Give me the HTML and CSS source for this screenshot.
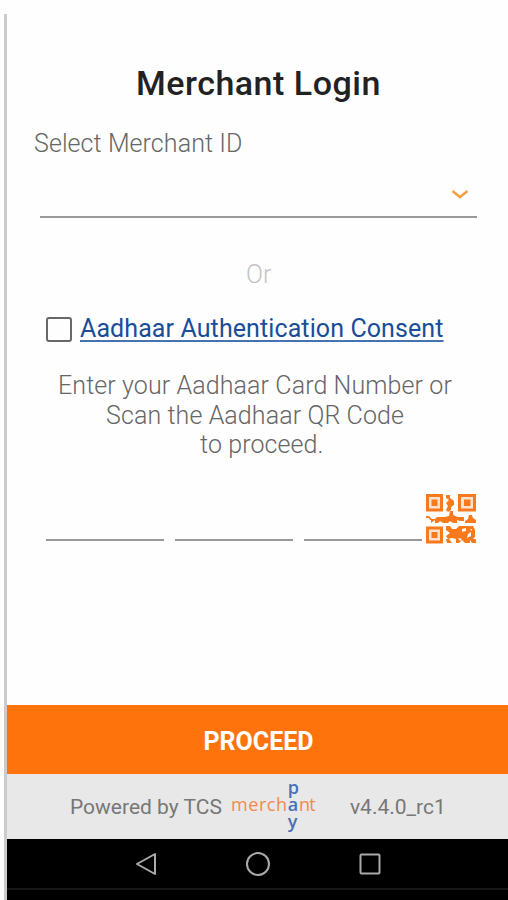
FILE: index.html
```html
<!DOCTYPE html>
<html lang="en">
<head>
  <meta charset="UTF-8" />
  <meta name="viewport" content="width=device-width, initial-scale=1.0" />
  <title>Merchant Login</title>
  <link rel="stylesheet" href="styles.css">
</head>
<body>
  <div class="edge"></div>
  <div class="screen">
    <main class="login">
      <h1>Merchant Login</h1>
      <div class="merchant-label">Select Merchant ID</div>
      <div class="merchant-select">
        <svg width="18" height="11" viewBox="0 0 18 11"><path d="M1.5 2 L9 8 L16.5 2" fill="none" stroke="#f5a044" stroke-width="2.6"/></svg>
      </div>
      <div class="or">Or</div>
      <div class="consent">
        <span class="checkbox"></span>
        <a class="consent-link">Aadhaar Authentication Consent</a>
      </div>
      <p class="hint">
        <span class="hint-first">Enter your Aadhaar Card Number or</span>
        <span class="hint-second">Scan the Aadhaar QR Code</span>
        <span class="hint-third">to proceed.</span>
      </p>
      <div class="aadhaar">
        <span class="digits"></span>
        <span class="digits"></span>
        <span class="digits"></span>
        <svg class="qr" width="50" height="50" viewBox="0 0 50 50" fill="#f97a1c">
          <path d="M1.5 1.5H15.5V16H1.5Z M33.5 1.5H48.5V16H33.5Z M1.5 34H15.5V48H1.5Z" fill="#fde3cf" stroke="#f97a1c" stroke-width="3"/>
          <path d="M5.500 5.500H11.500V12H5.500Z M38 5.500H44.500V12H38Z M5.500 38H11.500V44H5.500Z"/>
          <path d="M20 1h4v3l4 3v4l-3 2v3l-3 2-2-2 2-4-2-3 3-3-3-2z"/>
          <path d="M0 22h3l3 3h3l2-2h8l4-1 1-5h3v4l5 2h6v4h-4l-3-1v3h-4l-3-2-2 2h-5l-3-2-2 2h-3v-3l-4 3v-3H4l-1-2H0z"/>
          <path d="M39 27l3-2 1-4h3l1 3 3 2v3h-11z"/>
          <path d="M20 32h4l2 3h4l3-3h14l2 4v7l-2 2h3v4h-4l-2-3v3h-5l-3-3-3 3h-3v-4l-4-1-4 1-2-3 4-3-4-3z M20 45h3l3 4h-5z"/>
          <path d="M36 35l4-1v3l-4 1z M42 40l3-2v4l-4 2z M32 44l4 1-2 2z M44 35h2v2z" fill="#fff"/>
        </svg>
      </div>
    </main>
    <button class="proceed">PROCEED</button>
    <footer>
      <span class="powered">Powered by TCS</span>
      <span class="logo">merch<span class="pay"><b>p</b><b>a</b><b>y</b></span><span class="logo-end">nt</span></span>
      <span class="version">v4.4.0_rc1</span>
    </footer>
    <nav>
      <svg width="22" height="24" viewBox="0 0 22 24"><path d="M20 2 L20 22 L2 12 Z"/></svg>
      <svg width="26" height="26" viewBox="0 0 26 26"><circle cx="13" cy="13" r="11"/></svg>
      <svg width="22" height="22" viewBox="0 0 22 22"><rect x="1.5" y="1.5" width="19" height="19" rx="1"/></svg>
    </nav>
    <div class="bezel"></div>
  </div>
</body>
</html>
```
FILE: styles.css
```css
* { box-sizing: border-box; }
body {
  font-family: Roboto, sans-serif;
  background: #fefefe;
  margin: 0;
  height: 900px;
  display: flex;
  overflow: hidden;
}
.edge {
  width: 3px;
  margin: 14px 0 0 4px;
  background: #cbcbcb;
}
.screen {
  flex: 1;
  display: flex;
  flex-direction: column;
}
.login {
  height: 705px;
  padding: 63px 31px 0 27px;
}
h1 {
  margin: 0 0 0 102px;
  font-size: 34px;
  line-height: 40px;
  font-weight: 500;
  letter-spacing: 0.5px;
  color: #222;
  white-space: nowrap;
}
.merchant-label {
  margin-top: 26px;
  font-size: 25px;
  line-height: 30px;
  font-weight: 300;
  letter-spacing: 0.08px;
  color: #666;
}
.merchant-select {
  height: 59px;
  margin-left: 6px;
  padding: 30px 8px 0 0;
  border-bottom: 2px solid #999;
  text-align: right;
  line-height: 0;
}
.or {
  margin: 42px 0 0 212px;
  font-size: 25px;
  line-height: 30px;
  font-weight: 300;
  color: #c4c4c4;
}
.consent {
  display: flex;
  align-items: center;
  height: 30px;
  margin: 23px 0 0 12px;
}
.checkbox {
  width: 26px;
  height: 25px;
  margin-top: 3px;
  border: 2px solid #686868;
  border-radius: 3px;
}
.consent-link {
  margin-left: 8px;
  font-size: 25px;
  letter-spacing: 0.1px;
  color: #194d98;
  text-decoration: underline;
  text-decoration-color: #4673b0;
  text-decoration-thickness: 2px;
  text-underline-offset: 3px;
  white-space: nowrap;
}
.hint {
  margin: 28px 0 0;
  font-size: 25px;
  line-height: 29.5px;
  font-weight: 300;
  letter-spacing: 0.1px;
  color: #666;
  white-space: nowrap;
}
.hint span { display: block; }
.hint-first { margin-left: 24px; }
.hint-second { margin-left: 72px; }
.hint-third { margin-left: 166px; }
.aadhaar {
  display: flex;
  align-items: flex-end;
  margin: 34px 0 0 12px;
}
.digits {
  width: 118px;
  margin: 0 11px 3px 0;
  border-bottom: 2px solid #999;
}
.qr { margin-left: -7px; }
.proceed {
  height: 69px;
  padding: 3px 0 0 2px;
  border: none;
  background: #ff730d;
  color: #fff;
  font-family: inherit;
  font-size: 25px;
  font-weight: 700;
}
footer {
  display: flex;
  align-items: center;
  height: 65px;
  padding-left: 63px;
  background: #e8e8e8;
  color: #777;
  font-size: 21px;
  white-space: nowrap;
}
.powered, .version { padding-top: 1px; }
.logo {
  width: 84px;
  margin-left: 9px;
  font-family: "Open Sans", sans-serif;
  font-size: 18px;
  line-height: 18px;
  letter-spacing: 0.6px;
  color: #f18b4b;
}
.pay {
  display: inline-flex;
  flex-direction: column;
  vertical-align: middle;
  padding-bottom: 4px;
  letter-spacing: 0;
  color: #4a70b5;
}
.pay b {
  font-weight: 600;
  line-height: 17px;
}
.logo-end { letter-spacing: -0.8px; }
.version { margin-left: 35px; }
nav {
  display: flex;
  align-items: center;
  height: 49px;
  padding-left: 128px;
  background: #000;
}
nav svg {
  fill: none;
  stroke: #aaa;
  stroke-width: 2;
  stroke-linejoin: round;
}
nav svg + svg { margin-left: 88px; }
.bezel {
  flex: 1;
  background: #000;
  border-top: 2px solid #161616;
}
```
